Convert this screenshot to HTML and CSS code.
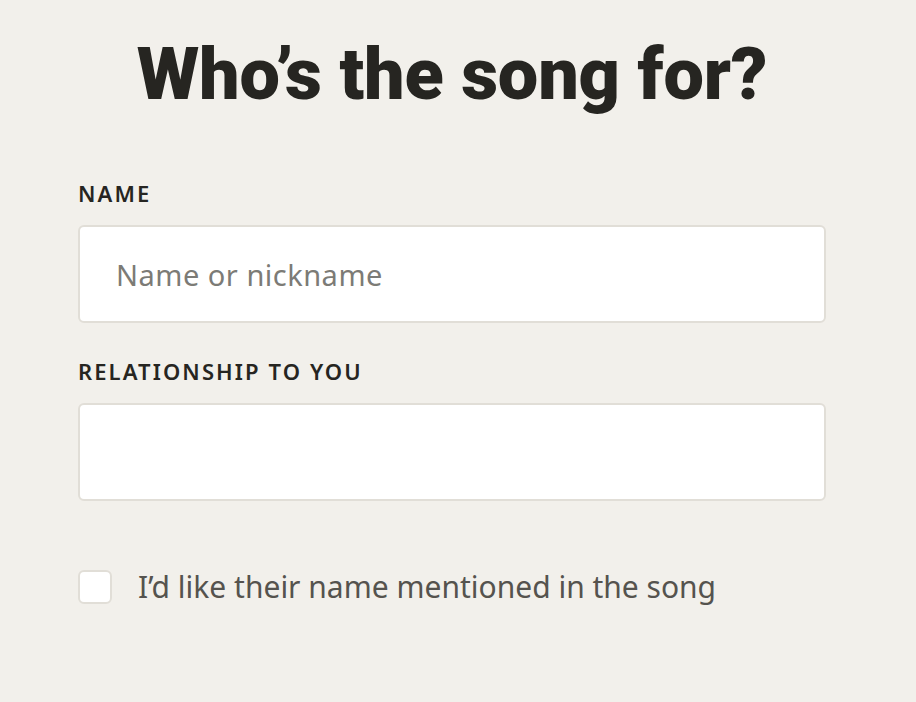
FILE: index.html
```html
<!DOCTYPE html>
<html lang="en">
<head>
  <meta charset="UTF-8" />
  <meta name="viewport" content="width=device-width, initial-scale=1.0"/>
  <title>Who's the song for?</title>
  <link rel="stylesheet" href="styles.css">
</head>
<body>
  <main class="recipient">
    <h1>Who’s the song for?</h1>

    <form class="recipient-form">
      <label class="field">
        <span class="field-label">Name</span>
        <input type="text" name="name" placeholder="Name or nickname" />
      </label>

      <label class="field">
        <span class="field-label">Relationship to you</span>
        <input type="text" name="relationship" />
      </label>

      <label class="check">
        <input type="checkbox" name="mention" />
        <span>I’d like their name mentioned in the song</span>
      </label>
    </form>
  </main>
</body>
</html>
```

FILE: styles.css
```css
body {
  margin: 0;
  background: #f2f0eb;
  color: #262521;
  font-family: "Noto Sans", sans-serif;
}

.recipient {
  width: 748px;
  padding: 30px 0 0 78px;
}

h1 {
  margin: 0 0 59px;
  text-align: center;
  font-family: "Roboto", sans-serif;
  font-weight: 900;
  font-size: 72px;
  line-height: 90px;
  letter-spacing: -0.2px;
}

.field {
  display: block;
  margin-bottom: 34px;
}

.field-label {
  display: block;
  margin-bottom: 18px;
  font-size: 22px;
  font-weight: 600;
  letter-spacing: 2.1px;
  text-transform: uppercase;
  line-height: 28px;
}

.field input {
  display: block;
  box-sizing: border-box;
  width: 100%;
  height: 98px;
  padding: 0 36px;
  background: #fff;
  border: 2px solid #e1ded7;
  border-radius: 6px;
  font-family: inherit;
  font-size: 29px;
  color: #262521;
}

.field input::placeholder {
  color: #7c7b76;
  letter-spacing: 0.5px;
}

.check {
  display: flex;
  align-items: center;
  gap: 26px;
  margin-top: 65px;
  font-size: 30px;
  color: #55534e;
}

.check input {
  appearance: none;
  margin: 0;
  width: 34px;
  height: 34px;
  background: #fff;
  border: 2px solid #e1ded7;
  border-radius: 6px;
}
```
